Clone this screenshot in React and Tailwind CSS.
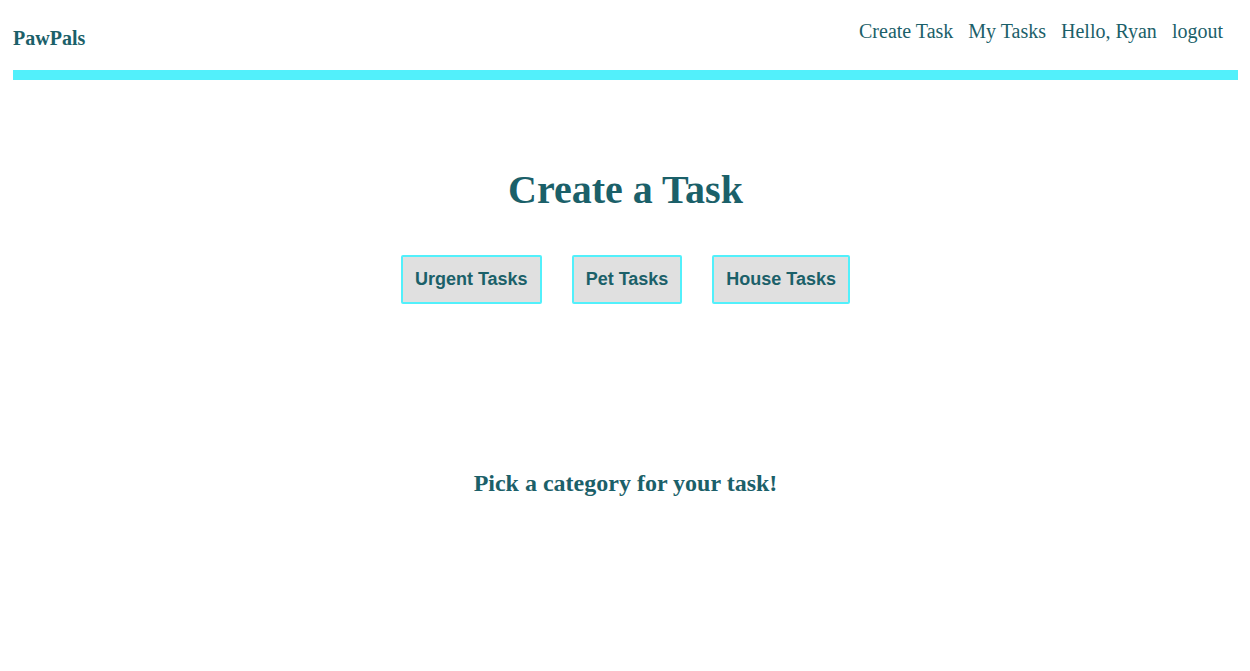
export default function App() {
  const categories = ['Urgent Tasks', 'Pet Tasks', 'House Tasks']
  const links = ['Create Task', 'My Tasks', 'Hello, Ryan', 'logout']

  return (
    <div className="min-h-screen bg-white pl-[13px] pr-[12px] text-[#1b6069] font-['Liberation_Serif',serif]">
      {/* Header */}
      <header className="flex h-[70px] items-start justify-between">
        <h1 className="pt-[27px] text-[20px] font-bold leading-[23px]">PawPals</h1>
        <nav className="flex gap-[15px] pr-[15px] pt-[20px] text-[20px] leading-[23px]">
          {links.map(l => (
            <a key={l} href="#" className="whitespace-nowrap">{l}</a>
          ))}
        </nav>
      </header>
      <div className="h-[10px] bg-[#52f0fb]" />

      <main className="flex flex-col items-center">
        <h2 className="mt-[87px] text-[40px] font-bold leading-[46px]">Create a Task</h2>

        <div className="mt-[42px] flex gap-[30px]">
          {categories.map(c => (
            <button
              key={c}
              className="h-[49px] rounded-[2px] border-2 border-[#52f0fb] bg-[#e0e0e0] px-3 font-['Liberation_Sans',sans-serif] text-[18px] font-bold text-[#1b6069]"
            >
              {c}
            </button>
          ))}
        </div>

        <p className="mt-[165px] text-[24px] font-bold leading-[28px]">Pick a category for your task!</p>
      </main>
    </div>
  )
}
